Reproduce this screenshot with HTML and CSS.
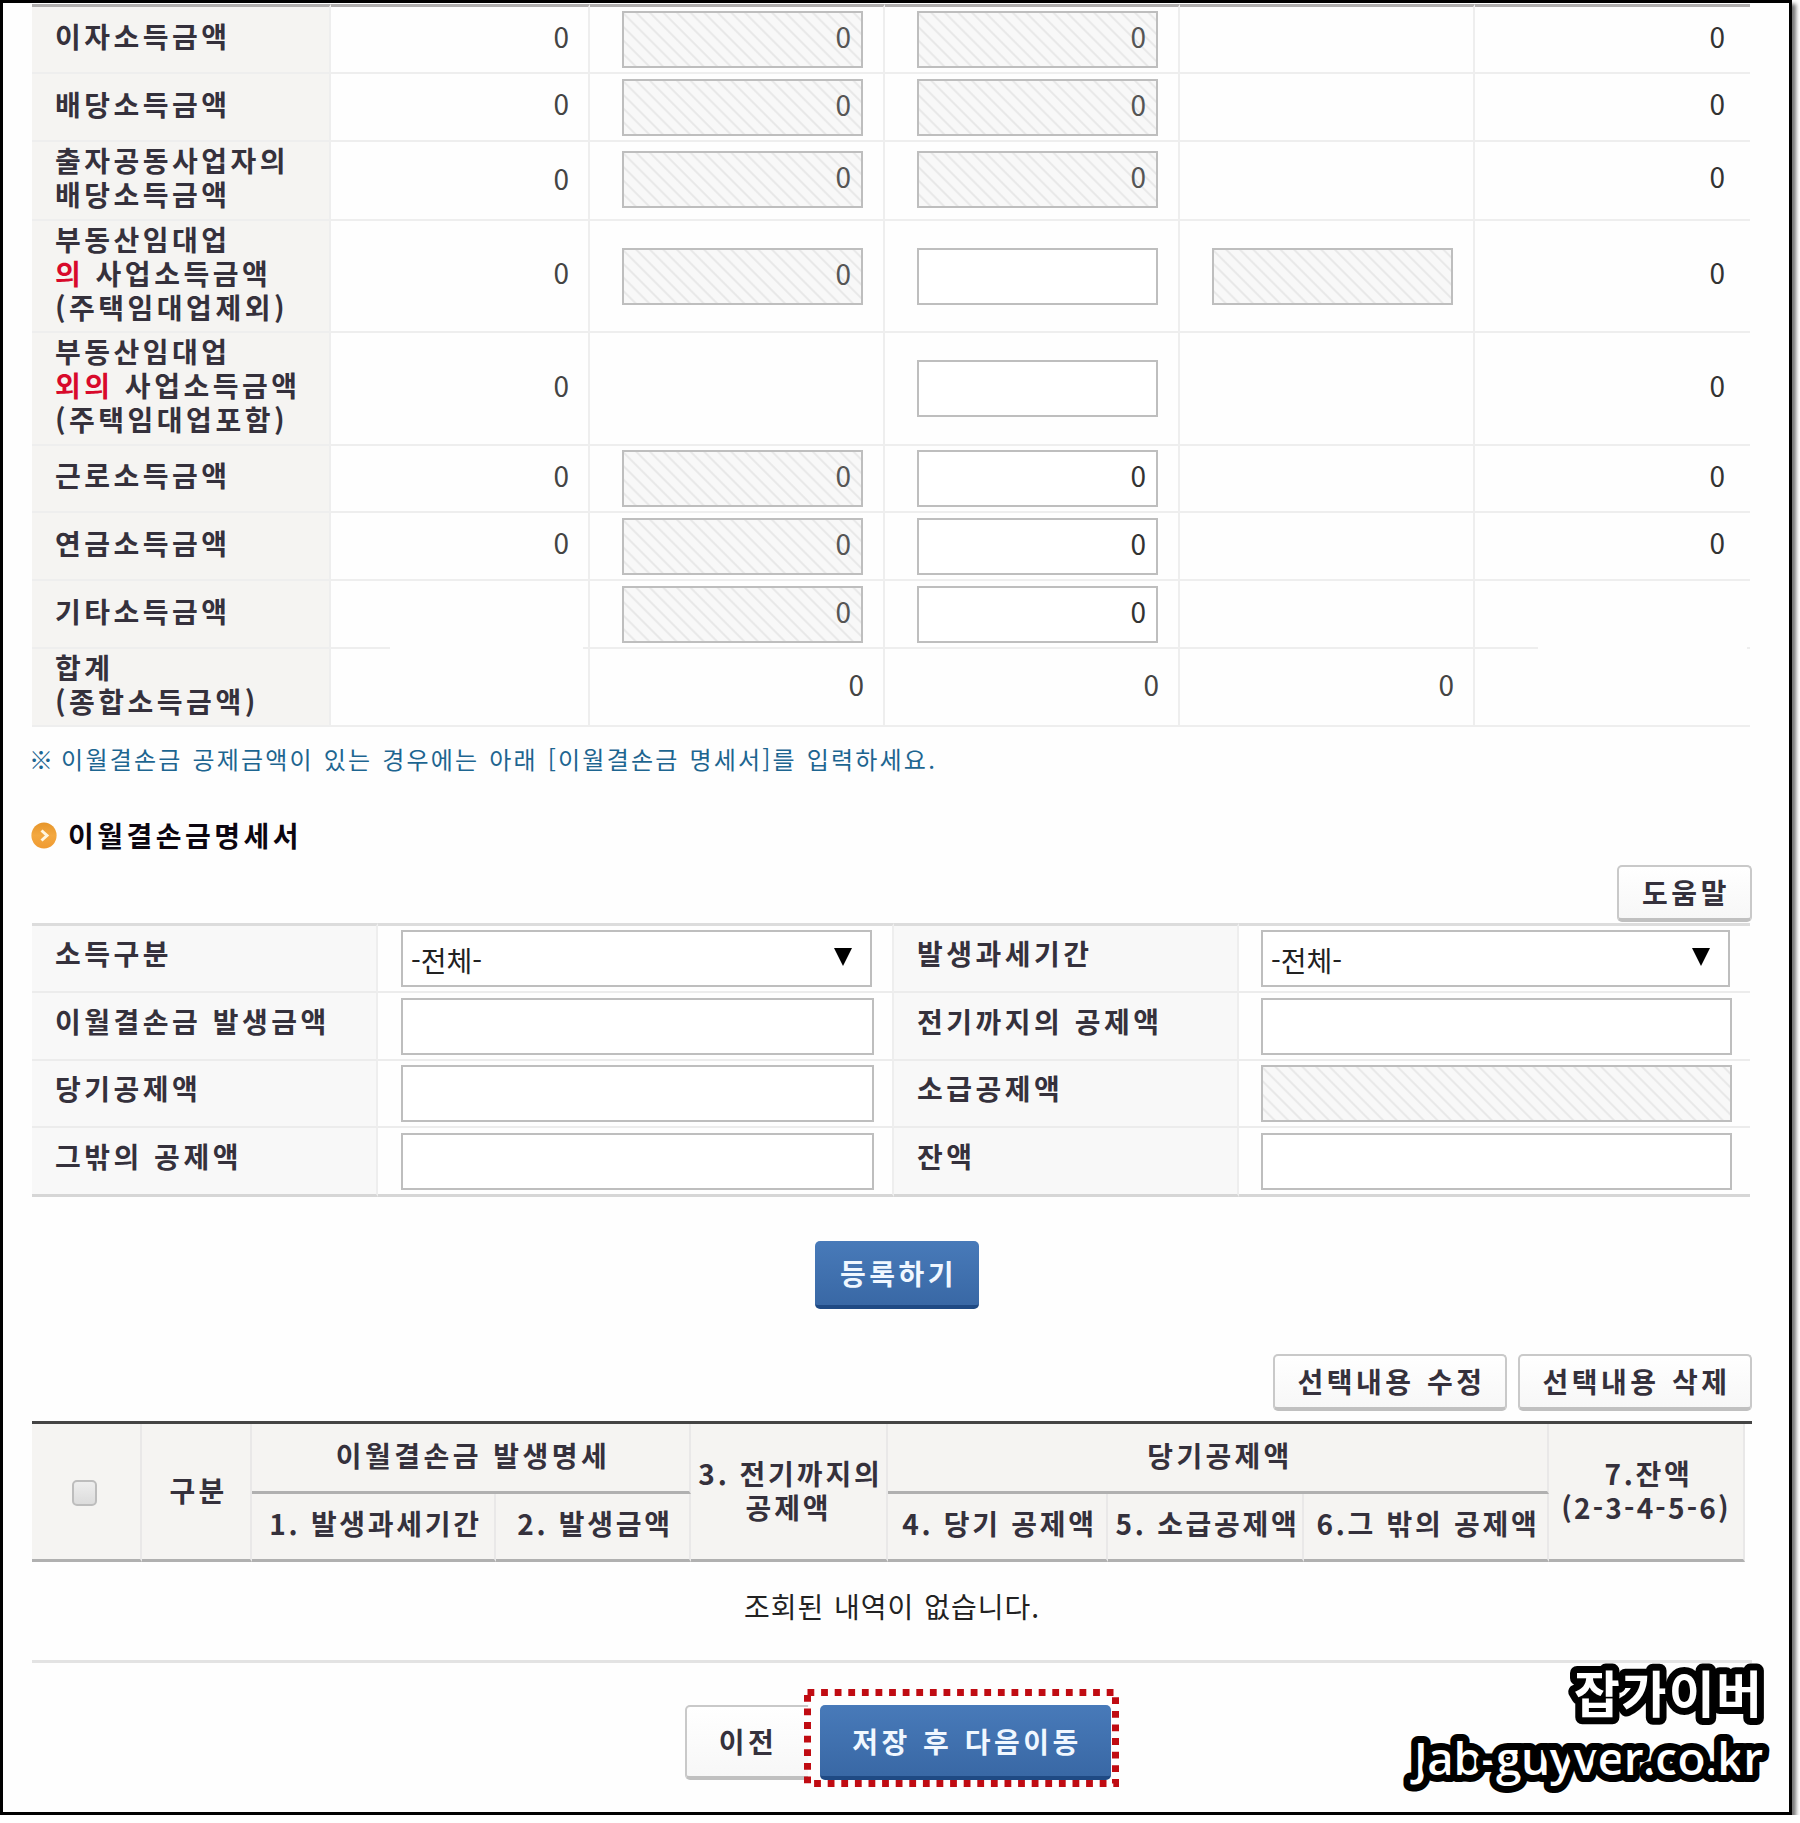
FILE: index.html
```html
<!DOCTYPE html>
<html lang="ko">
<head>
<meta charset="utf-8">
<title>이월결손금명세서</title>
<link rel="stylesheet" href="styles.css">
</head>
<body>
<main class="frame">
  <section class="income">
    <div class="cell head first">이자소득금액</div>
    <div class="cell num first">0</div>
    <div class="cell first"><div class="field off">0</div></div>
    <div class="cell first"><div class="field off">0</div></div>
    <div class="cell first"></div>
    <div class="cell num last dark first">0</div>

    <div class="cell head">배당소득금액</div>
    <div class="cell num">0</div>
    <div class="cell"><div class="field off">0</div></div>
    <div class="cell"><div class="field off">0</div></div>
    <div class="cell"></div>
    <div class="cell num last dark">0</div>

    <div class="cell head">출자공동사업자의<br>배당소득금액</div>
    <div class="cell num low">0</div>
    <div class="cell raised"><div class="field off">0</div></div>
    <div class="cell raised"><div class="field off">0</div></div>
    <div class="cell"></div>
    <div class="cell num last dark">0</div>

    <div class="cell head">부동산임대업<br><em>의</em> 사업소득금액<br>(주택임대업제외)</div>
    <div class="cell num">0</div>
    <div class="cell"><div class="field off">0</div></div>
    <div class="cell"><div class="field"></div></div>
    <div class="cell"><div class="field off"></div></div>
    <div class="cell num last dark">0</div>

    <div class="cell head">부동산임대업<br><em>외의</em> 사업소득금액<br>(주택임대업포함)</div>
    <div class="cell num">0</div>
    <div class="cell"></div>
    <div class="cell"><div class="field"></div></div>
    <div class="cell"></div>
    <div class="cell num last dark">0</div>

    <div class="cell head">근로소득금액</div>
    <div class="cell num">0</div>
    <div class="cell"><div class="field off">0</div></div>
    <div class="cell"><div class="field">0</div></div>
    <div class="cell"></div>
    <div class="cell num last dark">0</div>

    <div class="cell head">연금소득금액</div>
    <div class="cell num">0</div>
    <div class="cell"><div class="field off">0</div></div>
    <div class="cell"><div class="field">0</div></div>
    <div class="cell"></div>
    <div class="cell num last dark">0</div>

    <div class="cell head">기타소득금액</div>
    <div class="cell masked"></div>
    <div class="cell"><div class="field off">0</div></div>
    <div class="cell"><div class="field">0</div></div>
    <div class="cell"></div>
    <div class="cell last masked"></div>

    <div class="cell head">합계<br>(종합소득금액)</div>
    <div class="cell"></div>
    <div class="cell num sum">0</div>
    <div class="cell num sum">0</div>
    <div class="cell num sum">0</div>
    <div class="cell last"></div>
  </section>

  <p class="note"><span class="mark">※</span> 이월결손금 공제금액이 있는 경우에는 아래 [이월결손금 명세서]를 입력하세요.</p>

  <h2 class="title">
    <svg width="26" height="27" viewBox="0 0 26 27">
      <defs><linearGradient id="orange" x1="0" y1="0" x2="0" y2="1"><stop offset="0" stop-color="#e6952a"/><stop offset=".5" stop-color="#f3a840"/><stop offset="1" stop-color="#f09a30"/></linearGradient></defs>
      <ellipse cx="13" cy="13.5" rx="12.6" ry="13" fill="url(#orange)"/>
      <path d="M10.5 8.5l5.5 5-5.5 5" fill="none" stroke="#fff6df" stroke-width="3"/>
    </svg>
    <span>이월결손금명세서</span>
  </h2>

  <div class="tools help"><a class="btn w-help">도움말</a></div>

  <section class="form">
    <div class="label">소득구분</div>
    <div class="value"><div class="field select"><span>-전체-</span><svg width="18" height="18" viewBox="0 0 18 18"><path d="M0 0h18L9 18z"/></svg></div></div>
    <div class="label">발생과세기간</div>
    <div class="value end"><div class="field select"><span>-전체-</span><svg width="18" height="18" viewBox="0 0 18 18"><path d="M0 0h18L9 18z"/></svg></div></div>
    <div class="label">이월결손금 발생금액</div>
    <div class="value"><div class="field"></div></div>
    <div class="label">전기까지의 공제액</div>
    <div class="value end"><div class="field"></div></div>
    <div class="label">당기공제액</div>
    <div class="value"><div class="field"></div></div>
    <div class="label">소급공제액</div>
    <div class="value end"><div class="field off"></div></div>
    <div class="label">그밖의 공제액</div>
    <div class="value"><div class="field"></div></div>
    <div class="label">잔액</div>
    <div class="value end"><div class="field"></div></div>
  </section>

  <div class="register"><a class="btn blue w-reg">등록하기</a></div>

  <div class="tools edit"><a class="btn w-edit">선택내용 수정</a><a class="btn w-edit">선택내용 삭제</a></div>

  <section class="list">
    <div class="th tall c1"><span class="check"></span></div>
    <div class="th tall c2">구분</div>
    <div class="th c3">이월결손금 발생명세</div>
    <div class="th tall c5">3. 전기까지의<br>공제액</div>
    <div class="th c6">당기공제액</div>
    <div class="th tall c9"><div>7.잔액<br><span class="formula">(2-3-4-5-6)</span></div></div>
    <div class="th low-row">1. 발생과세기간</div>
    <div class="th low-row">2. 발생금액</div>
    <div class="th low-row">4. 당기 공제액</div>
    <div class="th low-row">5. 소급공제액</div>
    <div class="th low-row">6.그 밖의 공제액</div>
  </section>
  <p class="empty">조회된 내역이 없습니다.</p>

  <nav class="steps">
    <a class="btn prev">이전</a>
    <a class="btn blue next">저장 후 다음이동
      <svg class="marker" width="315" height="98" viewBox="0 0 315 98"><rect x="3.5" y="3.5" width="308" height="91" fill="none" stroke="#c00b12" stroke-width="7" stroke-dasharray="6.8 6.8"/></svg>
    </a>
  </nav>

  <svg class="brand" width="380" height="140" viewBox="0 0 380 140">
    <text class="brand-ko" x="183" y="57" textLength="188">잡가이버</text>
    <text class="brand-en" x="23" y="119" textLength="349">Jab-guyver.co.kr</text>
  </svg>
</main>
</body>
</html>
```
FILE: styles.css
```css
* { box-sizing: border-box; }

body {
  margin: 0;
  background: #fff;
  font-family: "Noto Sans CJK KR", "Noto Sans", sans-serif;
  font-size: 28px;
  line-height: 34px;
  color: #35313c;
}

p, h2 { margin: 0; }

.frame {
  position: relative;
  width: 1792px;
  height: 1815px;
  border: 3px solid #000;
  padding: 1px 36px 0 29px;
  background: #fefefe;
  box-shadow: 4px 4px 4px rgba(0, 0, 0, .55);
}

/* income table */
.income {
  display: grid;
  width: 1718px;
  grid-template-columns: 299px 259px 295px 295px 295px 275px;
  grid-template-rows: 70px 68px 79px 112px 113px 67px 68px 68px 78px;
}

.cell {
  display: flex;
  align-items: center;
  border-right: 2px solid #eee;
  border-bottom: 2px solid #eee;
  padding-left: 32px;
}
.cell.first { border-top: 3px solid #b0aeae; }
.cell.last { border-right: 0; }

.cell.head {
  display: block;
  align-content: center;
  padding: 0 0 7px 23px;
  background: #f5f4f2;
  font-weight: 700;
  letter-spacing: 3.5px;
  white-space: nowrap;
}
.head em { font-style: normal; color: #d8092b; }

.cell.num {
  justify-content: flex-end;
  padding: 0 19px 8px 0;
  color: #444;
}
.cell.num.low { padding-bottom: 6px; }
.cell.num.last { padding-right: 25px; }
.cell.num.dark { color: #333; }
.cell.num.dark:nth-child(18) { padding-bottom: 10px; }
.cell.num.sum { padding-bottom: 6px; }
.cell.raised { padding-bottom: 3px; }

.cell.masked { position: relative; }
.cell.masked::after {
  content: "";
  position: absolute;
  left: 59px;
  right: 5px;
  bottom: -3px;
  height: 4px;
  background: #fefefe;
}
.cell.last.masked::after { left: 63px; right: 3px; }

.field {
  width: 241px;
  height: 57px;
  border: 2px solid #bebebe;
  background: #fff;
  padding: 0 10px 7px 0;
  color: #333;
  display: flex;
  align-items: center;
  justify-content: flex-end;
}
.field.off {
  color: #555;
  background: repeating-linear-gradient(45deg, #f8f8f8 0 6.4px, #e8e8e8 7.6px 8.4px, #f8f8f8 9.6px);
}

.note {
  margin-top: 15px;
  height: 34px;
  font-size: 24px;
  letter-spacing: 2.2px;
  word-spacing: 1px;
  color: #1d6590;
  white-space: nowrap;
}
.mark { margin: 0 -4px 0 -3px; }

.title {
  display: flex;
  align-items: center;
  gap: 11px;
  height: 34px;
  margin: 42px 0 0 -1px;
  font-size: 28px;
  letter-spacing: 3.5px;
  color: #0c0610;
}

/* buttons */
.tools {
  display: flex;
  justify-content: flex-end;
  gap: 11px;
  width: 1720px;
}
.btn {
  display: flex;
  align-items: center;
  justify-content: center;
  height: 57px;
  border: 2px solid #c9c9c9;
  border-bottom: 4px solid #c0c0c0;
  border-radius: 5px;
  padding-bottom: 1px;
  background: linear-gradient(#fff, #f7f7f7);
  font-weight: 700;
  letter-spacing: 3.5px;
  word-spacing: 1px;
  text-indent: 3px;
  white-space: nowrap;
}
.btn.blue {
  border: 0;
  border-bottom: 4px solid #1f4a84;
  background: linear-gradient(#487ab9, #3968a5);
  color: #f0f7ff;
}
.w-help { width: 135px; }
.w-edit { width: 234px; }
.w-reg { width: 164px; height: 68px; }

.help { margin-top: 13px; }

/* loss form */
.form {
  display: grid;
  width: 1718px;
  margin-top: 1px;
  grid-template-columns: 346px 516px 345px 511px;
  grid-template-rows: 70px 68px 67px 69px;
}
.label, .value {
  border-right: 2px solid #eee;
  border-bottom: 2px solid #ececec;
}
.label:nth-child(-n+4), .value:nth-child(-n+4) { border-top: 3px solid #dcdcdc; }
.label:nth-child(n+13), .value:nth-child(n+13) { border-bottom: 3px solid #d6d6d6; }
.label {
  display: flex;
  align-items: center;
  background: #f8f8f8;
  padding: 0 0 11px 23px;
  font-weight: 700;
  letter-spacing: 3.5px;
  white-space: nowrap;
}
.value {
  display: flex;
  align-items: center;
  padding-left: 23px;
}
.value.end { border-right: 0; padding-left: 22px; }
.value .field { width: 473px; }
.value.end .field { width: 471px; }
.value .field.select {
  width: 471px;
  justify-content: space-between;
  padding: 0 18px 0 8px;
  color: #222;
}
.value.end .field.select { width: 469px; }
.select span { padding-top: 2px; }
.select svg { margin-bottom: 4px; }

.register { display: flex; margin: 44px 0 0 783px; }
.edit { margin-top: 45px; }

/* loss list */
.list {
  display: grid;
  width: 1720px;
  margin-top: 10px;
  border-top: 3px solid #444;
  padding-right: 7px;
  grid-template-columns: 110px 110px 244px 195px 197px 220px 196px 245px 196px;
  grid-template-rows: 70px 68px;
}
.th {
  display: flex;
  align-items: center;
  justify-content: center;
  text-align: center;
  border-right: 2px solid #e9e8e8;
  border-bottom: 3px solid #b0b0b0;
  padding-bottom: 6px;
  background: #f5f4f2;
  font-weight: 700;
  letter-spacing: 3.3px;
  text-indent: 5px;
  white-space: nowrap;
}
.tall { grid-row: 1 / 3; padding-bottom: 4px; }
.c3 { grid-column: 3 / 5; letter-spacing: 3.5px; }
.c5 { grid-column: 5; letter-spacing: 2.9px; word-spacing: -1px; text-indent: 4px; }
.c6 { grid-column: 6 / 9; }
.c9 { grid-column: 9; letter-spacing: 2.7px; padding-bottom: 3px; }
.c5.tall { padding-bottom: 3px; }
.formula { letter-spacing: 2.2px; }
.low-row { grid-row: 2; padding-bottom: 7px; letter-spacing: 2.7px; }
.check {
  width: 25px;
  height: 26px;
  margin: 6px 3px 0 0;
  border: 2px solid #bdbdbd;
  border-radius: 5px;
  background: linear-gradient(#eee, #dcdcdc);
}

.empty {
  width: 1720px;
  height: 101px;
  border-bottom: 3px solid #e3e3e3;
  padding-top: 27px;
  text-align: center;
  color: #222;
  letter-spacing: 1px;
  word-spacing: 1px;
}

.steps { display: flex; margin: 42px 0 0 653px; }
.steps .btn { height: 75px; }
.prev { width: 135px; padding-right: 12px; }
.next { position: relative; width: 291px; }
.next.btn { box-shadow: 0 0 0 12px #fefefe; padding-bottom: 0; }
.marker { position: absolute; left: -16px; top: -16px; }

/* brand signature, drawn over the lower right corner */
.brand {
  position: absolute;
  left: 1388px;
  top: 1653px;
  fill: #fff;
  stroke: #000;
  stroke-width: 14px;
  stroke-linejoin: round;
  paint-order: stroke fill;
}
.brand-ko { font-size: 50px; font-weight: 700; }
.brand-en { font-family: "Open Sans", "Noto Sans", sans-serif; font-size: 46px; font-weight: 600; }
```
